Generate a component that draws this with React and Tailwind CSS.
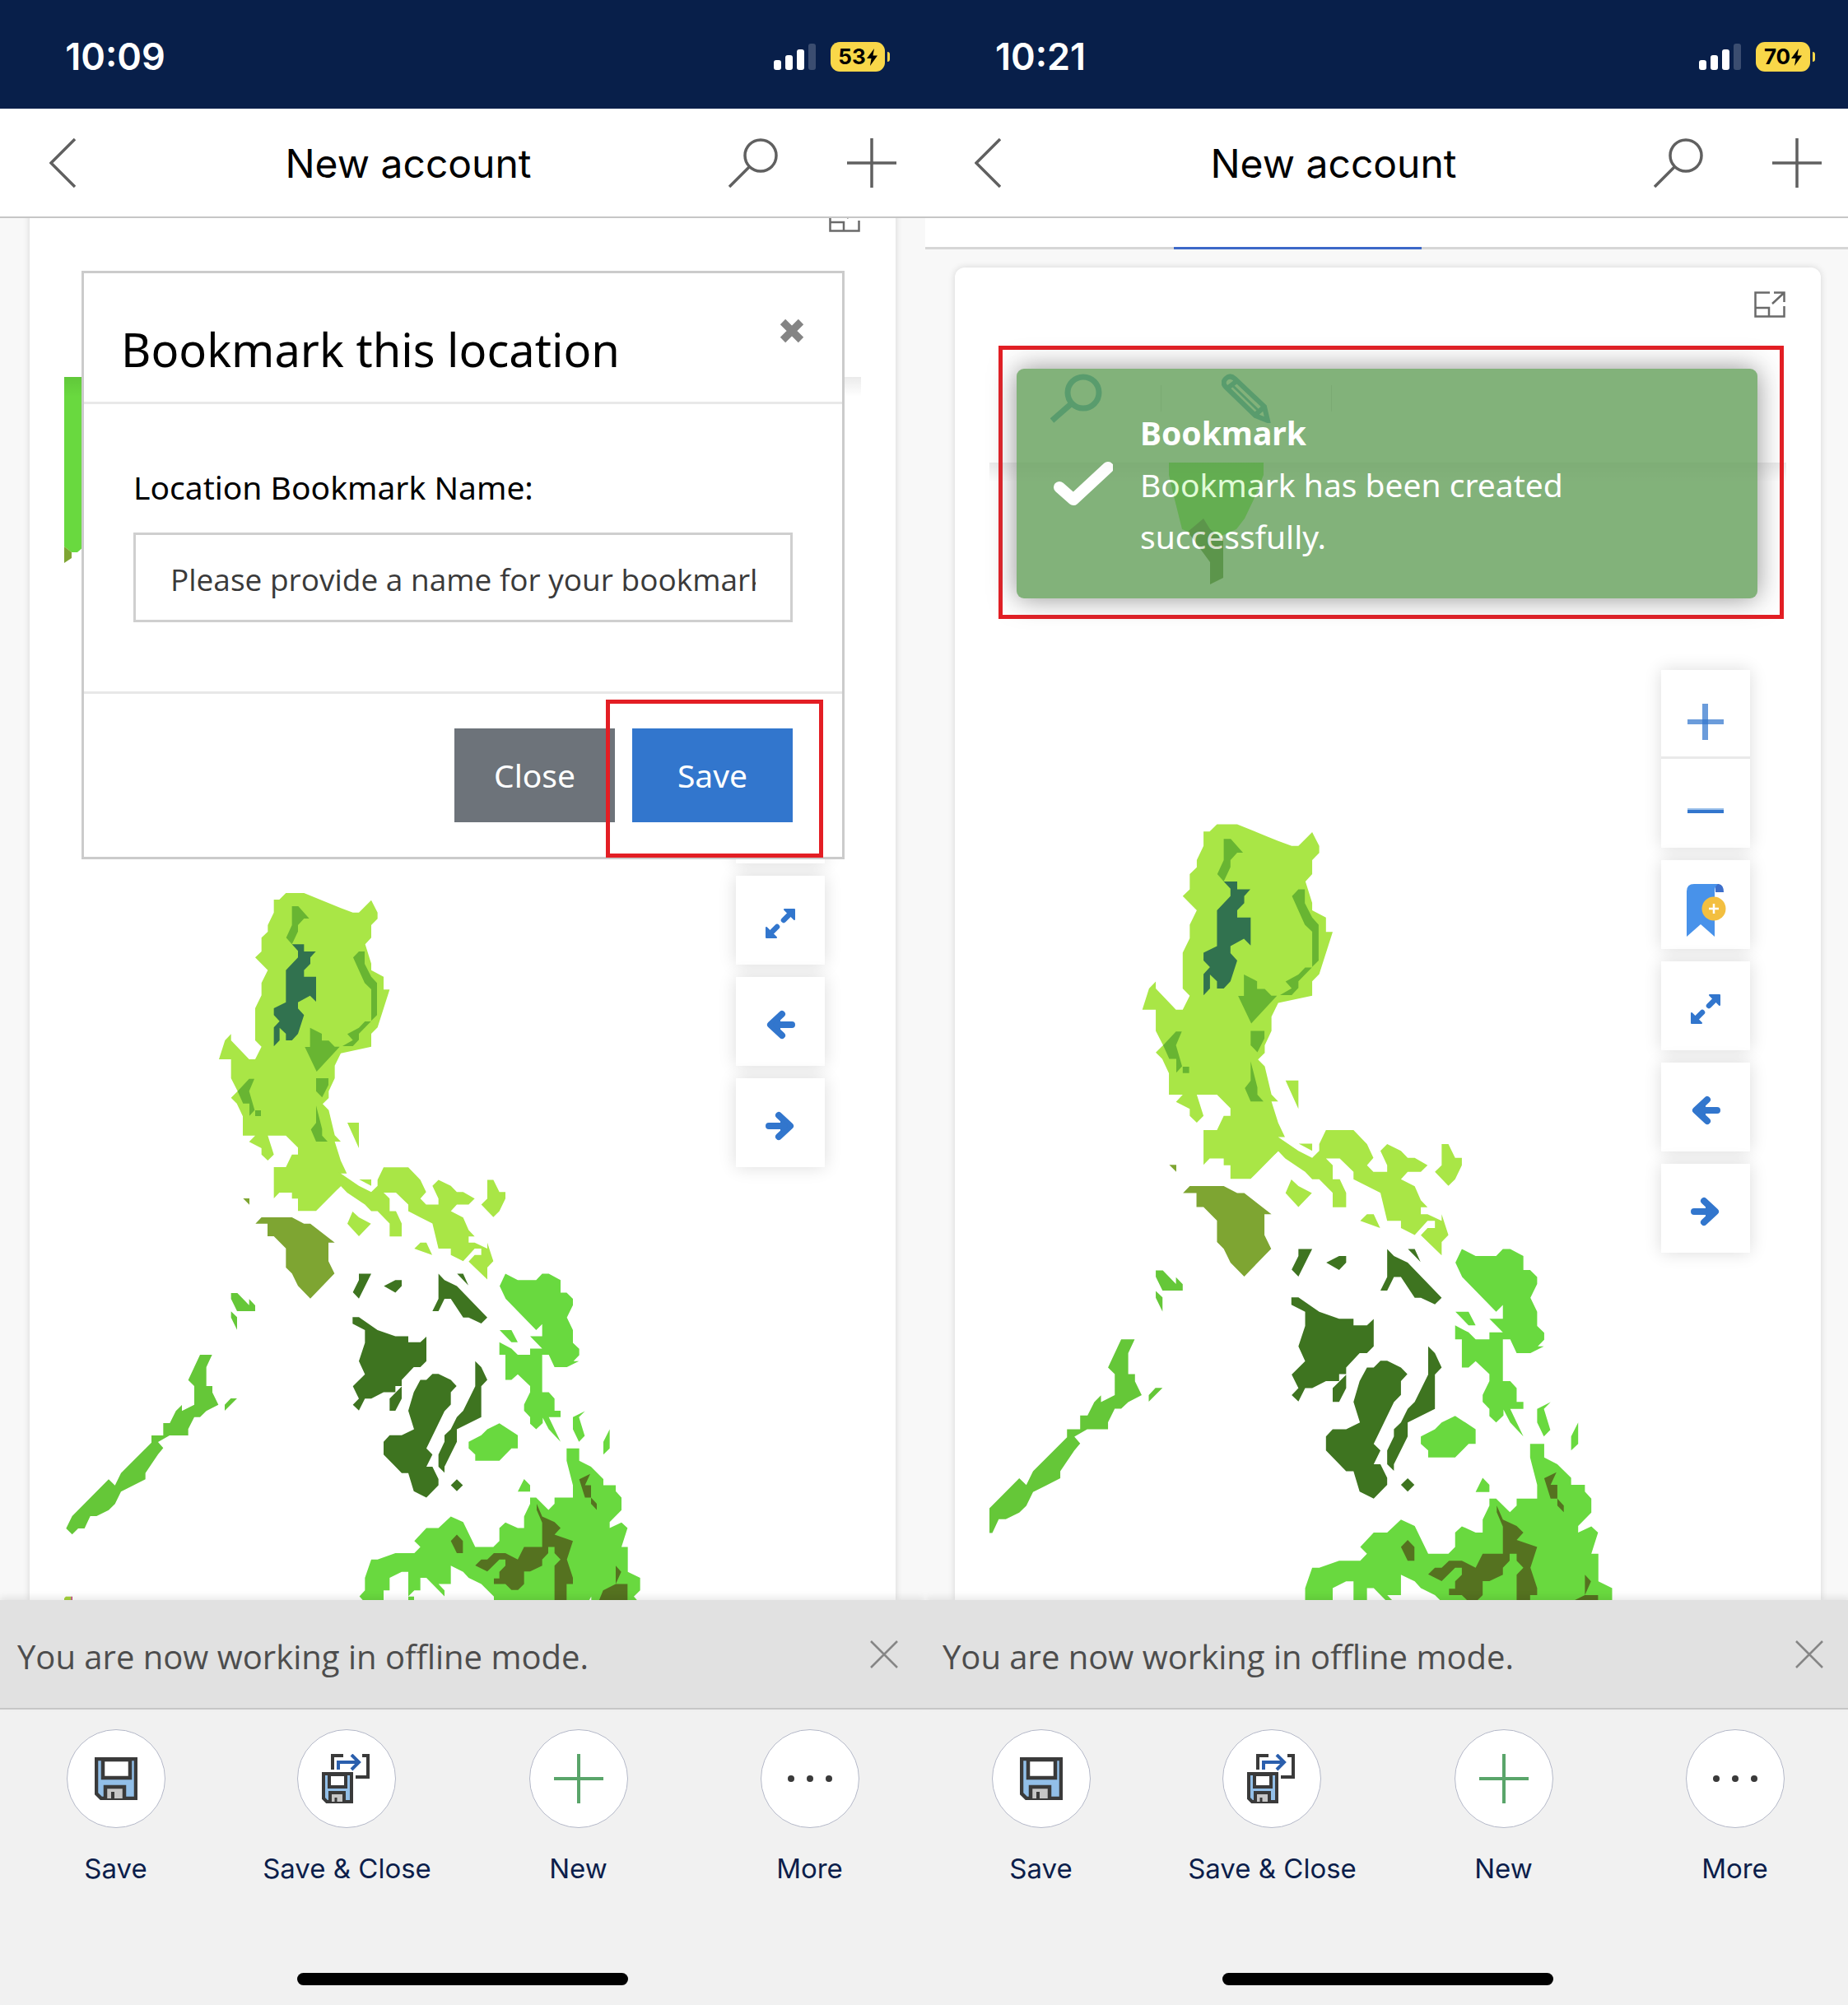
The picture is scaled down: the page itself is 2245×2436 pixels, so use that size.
import React from "react";

/* ---------- status bar and header ---------- */

function StatusBar({ time, battery }) {
  return (
    <div className="flex h-[132px] shrink-0 items-center justify-between bg-[#081f4a] pt-[6px] pr-[43px] pl-[70px] font-['Inter',sans-serif] text-white">
      <div className="w-[140px] text-center text-[45px] leading-[56px] font-semibold">{time}</div>
      <div className="flex items-center gap-[18px]">
        <svg width="51" height="33" viewBox="0 0 51 33" aria-label="Signal">
          <rect x="0" y="20" width="9" height="12" rx="3" fill="#fff" />
          <rect x="14" y="14" width="9" height="18" rx="3" fill="#fff" />
          <rect x="28" y="7" width="9" height="25" rx="3" fill="#fff" />
          <rect x="42" y="0" width="9" height="32" rx="3" fill="#3b4d70" />
        </svg>
        <div className="flex items-center gap-[3px]">
          <div className="flex h-9 w-[66px] items-center justify-center gap-px rounded-[11px] bg-[#f9d749] text-[26px] leading-9 font-bold text-black">
            <span>{battery}</span>
            <svg width="13" height="21" viewBox="0 0 13 21" aria-hidden="true">
              <path d="M9 0 0 12h5.500L4 21l9-12.500H7.500z" fill="#000" />
            </svg>
          </div>
          <div className="h-3 w-[3px] rounded-r-full bg-[#f9d749]" />
        </div>
      </div>
    </div>
  );
}

function Header() {
  return (
    <header className="flex h-[133px] shrink-0 items-center border-b-2 border-[#c6c6c6] bg-white pr-[35px] pl-[60px]">
      <button type="button" aria-label="Back" className="mr-[14px] w-8">
        <svg width="32" height="60" viewBox="0 0 32 60" fill="none" stroke="#606060" strokeWidth="3.500">
          <path d="M31 1 2 30l29 29" />
        </svg>
      </button>
      <h1 className="flex-1 pt-[2px] pl-px text-center font-['Inter',sans-serif] text-[48px] leading-[60px] font-normal text-black">
        New account
      </h1>
      <button type="button" aria-label="Search" className="mr-[84px]">
        <svg width="60" height="60" viewBox="0 0 60 60" fill="none" stroke="#606060" strokeWidth="3.500">
          <circle cx="39" cy="21" r="19" />
          <path d="M25.500 34.500 1 59" />
        </svg>
      </button>
      <button type="button" aria-label="Add">
        <svg width="60" height="60" viewBox="0 0 60 60" stroke="#606060" strokeWidth="3.500">
          <path d="M30 0v60M0 30h60" />
        </svg>
      </button>
    </header>
  );
}

/* ---------- map artwork ---------- */

function Islands() {
  return (
    <>
      <g transform="translate(-18 602) scale(0.33333)">
        <path
          fill="#a9e646"
          d="M862 75H928L1062 130 1106 146H1128L1173 101 1196 146V169L1173 192V238L1151 262 1173 332V356L1218 380V427H1240L1196 565 1173 588V635L1062 659 1040 704V750L1018 797V822L996 844 1018 866 1040 958 1062 981H1040L1062 1051 1084 1097H1062V1143L972 1234H906V1189H884V1167H838L818 1188V1074H862L884 1028H906V1003L862 959H796L818 1028 796 1050 773 1028V1005L728 982 750 959H705V889L683 842 662 821 686 797 662 750V681H618L640 612 662 589V612L728 681H750L773 635 750 612V495L773 448V403L796 356 750 310 773 288V238L796 216V192L818 146V99H838ZM1086 912H1128V1005ZM1129 1119H1173V1142ZM1105 1236 1128 1257 1172 1280 1128 1326 1086 1280Z"
        />
        <path
          fill="#68b532"
          d="M884 123H907L947 168H928L906 192V215L884 262 863 238 884 192ZM1128 288H1149V333L1173 380 1194 403V520L1173 541V426L1149 403 1107 310ZM1150 543H1172L1128 588V610L1106 633H1068L1106 611 1086 589 1128 566ZM950 566 993 588V613H1018L1040 635H1058L974 726 931 636H950ZM972 750H1017V775L994 820 972 797ZM728 752H747L728 797 748 866 729 887V842H706L686 797ZM750 867H771V888H750ZM972 850 994 935V959L1014 981H972L953 937 972 913Z"
        />
        <path
          fill="#31724f"
          d="M884 262H928V288H971L951 310V333L928 356V380H972V471L950 449 906 473V496L928 520 906 588 884 612H862V588L839 566V612L818 634V565L839 542 818 520V495L862 473V356L906 310V286Z"
        />
        <path
          fill="#7ea532"
          d="M706 1188H729V1211ZM773 1257H884L928 1280H951L1040 1349H1017V1417L1039 1462 951 1553 906 1507 884 1462 862 1440V1370L818 1326H795V1280H751Z"
        />
      </g>
      <g transform="translate(-18 1082) scale(0.33333)">
        <path
          fill="#65c738"
          d="M662 93H685L728 137V115L750 138V159H684L662 114ZM662 160 684 181V227L662 182ZM549 318H593L572 363V432H594V455L616 500 572 523 549 545H528L506 589V612H438L396 636 415 658 396 681 350 749V772L261 817 239 862 216 884 172 906H149L128 951H105L83 973 61 951 83 906 216 772 239 794 261 749 372 638V612H415V567H439L461 523 483 501V523L528 500V432L506 410ZM661 477H684L639 522V500Z"
        />
        <path fill="#a6d33c" d="M54 1205 60 1199H79V1240H54Z" />
        <path fill="#c04a78" d="M79 1199H84V1240H79Z" />
      </g>
      <g transform="translate(342 922) scale(0.33333 0.36351)">
        <path
          fill="#a9e646"
          d="M-30 120-18 126 48 167 93 188 116 167V147L138 105H228L272 147 293 188 272 210 293 230H338V210L316 167 338 147 383 167 405 188H428L470 210 448 230H405L383 252 428 273 448 315 470 336H448V357H470L516 377V357L538 419 516 440V480L448 420 470 398H494V377H470L428 419 383 398V377H338L316 293 228 252V230L183 190H138L160 210V252H183L204 293V336H160V293L116 252H93L70 230 5 190-18 168-30 178ZM250 377 272 357H294L315 398ZM516 147H538L560 188H582V210L560 252 538 272 494 230 516 210Z"
        />
        <path
          fill="#3e7420"
          d="M48 461H93L48 544 26 523 48 482ZM139 502 181 482H204V502L181 524ZM338 461 360 482 405 502 516 607 494 627 448 607H428L383 545H360L338 586H316L338 545ZM406 461H428L447 500ZM25 606H48L116 649 181 670H228V690H272L294 671V753L272 773H248L204 816V836H181V857H138L93 878H70L48 918 26 899 48 878 26 837 70 797 48 753 70 692V649L25 628ZM204 838V878L181 919H160V878ZM316 796H338L383 816 404 836 383 857V898L360 920 294 1045 316 1065 294 1106H316L338 1147V1168L294 1209 248 1188 228 1127H204L138 1065V1023L160 1001H204L249 981 228 919 248 857 272 816H294ZM472 753 494 773 516 816 494 837V940L405 981V1023L360 1106V1126L338 1106V1065L360 1023V1001L383 981 405 940 428 919 472 837ZM405 1148 427 1168 405 1188 383 1168Z"
        />
        <path
          fill="#69d93f"
          d="M448 1023 494 1001 516 981 560 961 627 1001V1045H604L560 1086H472V1065L448 1045ZM582 461 627 482H694L716 461H740L783 482V524H805L828 545V566L806 607 828 649V692L851 712V733L830 753H850L806 773H761L740 732H716V857H740L761 878V919H783V940H740L783 1023 740 981 718 942V960L694 981 672 962V940L650 919V898L672 857V836L627 797 604 816H582V732H560V690L604 711 627 732H672V711H716L672 670H716V629L694 649 583 545 561 502ZM561 649H604L627 690H604ZM828 940 872 920 850 940 871 1003 850 1023 828 981ZM962 981V1045L939 1065V1023ZM650 1147 672 1168V1189H627ZM805 1045H851V1086L894 1106 939 1147V1168H984V1188L1005 1209V1251L962 1291V1311L1005 1292 1027 1311 1005 1374H1028V1457L1073 1477V1519L1050 1540 1070 1560H540V1540L494 1498 448 1477 428 1457 383 1437V1498H338L360 1519V1539L294 1477H272V1519H250L228 1539V1457H204L160 1477V1519H138V1560H70L50 1539 70 1519V1477L93 1416H116L181 1395H250L272 1374 250 1354 294 1311H338L383 1272 428 1291 472 1374H538L560 1354V1311L582 1292 627 1311H650V1272L672 1230V1209H694L739 1250 761 1230V1209H828V1168L805 1086ZM228 1540H249V1560H228Z"
        />
        <path
          fill="#557220"
          d="M891 1130 872 1168H894V1209H872L851 1148ZM894 1209 915 1230V1250L894 1230ZM696 1230 716 1272 761 1291 783 1311 761 1333 828 1354 806 1416 828 1477V1498H805V1560H761V1437L783 1416 761 1395V1374H738V1395L716 1416V1437L672 1456H650V1498L628 1518H604L582 1498H540V1479H560V1457L582 1437V1416H560L516 1456 472 1436 494 1416H516L540 1395H582L627 1416 650 1374H716V1293L696 1250ZM405 1333 427 1354V1395H405L383 1354ZM984 1437 1004 1457 984 1498ZM984 1498H1027V1560H920L938 1519Z"
        />
        <path fill="#fff" d="M882 1560 895 1540V1560Z" />
      </g>
    </>
  );
}

function NearMap() {
  return (
    <svg className="absolute inset-0 h-full w-full" aria-label="Map of the Philippines">
      <path d="M0 0H24V206L16 213H9L0 206Z" fill="#69d93f" />
      <path d="M0 206 9 213V220L0 226Z" fill="#7ea532" />
      <Islands />
    </svg>
  );
}

function CloseMap() {
  return (
    <svg className="absolute inset-0 h-full w-full" aria-label="Map of the Philippines">
      <path d="M218 0H333V15L321 45 310 68 300 81 268 95 234 81 225 45 218 15Z" fill="#65ee30" />
      <path d="M260 68 268 81 284 93V140L268 148V121L246 91 241 84Z" fill="#3f6d10" />
      <g transform="translate(-24 -260) scale(1.1155)">
        <Islands />
      </g>
    </svg>
  );
}

/* ---------- map widget ---------- */

function ExpandCardIcon() {
  return (
    <svg width="38" height="32" viewBox="0 0 38 32" fill="none" stroke="#6a6a6a" strokeWidth="2.500">
      <path d="M19 1.500H1.500V30.500H36.500V18M1.500 20H18V30.500M24 1.500H36.500V13M36 2 22 15" />
    </svg>
  );
}

function MapButton({ label, children }) {
  return (
    <button
      type="button"
      aria-label={label}
      className="flex h-[108px] w-[108px] items-center justify-center bg-white pt-2 shadow-[0_0_20px_rgba(0,0,0,0.14)]"
    >
      {children}
    </button>
  );
}

function MapControls() {
  return (
    <div className="absolute top-[252px] right-11 flex flex-col gap-[15px]">
      <div className="flex flex-col shadow-[0_0_20px_rgba(0,0,0,0.14)]">
        <button
          type="button"
          aria-label="Zoom in"
          className="flex h-[108px] w-[108px] items-center justify-center border-b-[3px] border-[#e9e9e9] bg-white pt-5"
        >
          <svg width="44" height="44" viewBox="0 0 44 44" fill="#3276cd">
            <rect x="18" y="0" width="7" height="44" opacity="0.72" />
            <rect x="0" y="19" width="44" height="6" opacity="0.72" />
          </svg>
        </button>
        <button
          type="button"
          aria-label="Zoom out"
          className="flex h-[108px] w-[108px] items-center justify-center bg-white pt-5"
        >
          <svg width="44" height="44" viewBox="0 0 44 44">
            <rect x="0" y="18" width="44" height="3" fill="#9cc0ea" />
            <rect x="0" y="20" width="44" height="4" fill="#3276cd" />
          </svg>
        </button>
      </div>
      <MapButton label="Add bookmark">
        <svg width="50" height="74" viewBox="0 0 50 74">
          <path d="M37 8h4q6 1 6 10h-10z" fill="#3d6fcb" />
          <path d="M2 72V17Q2 8 11 8H40Q36 11 36 17V72L19 57Z" fill="#4892ea" />
          <circle cx="35" cy="38" r="14.500" fill="#f3bf40" />
          <path d="M35 32v12M29 38h12" stroke="#fff" strokeWidth="2.500" />
        </svg>
      </MapButton>
      <MapButton label="Full extent">
        <svg width="36" height="36" viewBox="0 0 36 36" fill="#3276cd" stroke="#3276cd">
          <path d="M23 1H35V13Z M1 23V35H13Z" strokeWidth="2" strokeLinejoin="round" />
          <path d="M22 14 30 6M6 30l8-8" strokeWidth="6.500" strokeLinecap="round" />
        </svg>
      </MapButton>
      <MapButton label="Previous extent">
        <svg width="36" height="36" viewBox="0 0 36 36" fill="#3276cd" stroke="#3276cd" strokeWidth="8" strokeLinejoin="round" strokeLinecap="round">
          <path d="M20 5 6 18 20 31M8 18H32" fill="none" />
          <path d="M18 9V27L8 18Z" stroke="none" />
        </svg>
      </MapButton>
      <MapButton label="Next extent">
        <svg width="36" height="36" viewBox="0 0 36 36" fill="#3276cd" stroke="#3276cd" strokeWidth="8" strokeLinejoin="round" strokeLinecap="round">
          <path d="M16 5 30 18 16 31M28 18H4" fill="none" />
          <path d="M18 9V27L28 18Z" stroke="none" />
        </svg>
      </MapButton>
    </div>
  );
}

function MapTools() {
  return (
    <div className="flex h-[157px] shrink-0 items-center">
      <button type="button" aria-label="Find" className="flex w-[208px] justify-center pl-1">
        <svg width="64" height="60" viewBox="0 0 64 60" fill="none" stroke="#2f93bd" strokeWidth="7">
          <circle cx="40" cy="23" r="19" />
          <path d="M26 36 2 57" />
        </svg>
      </button>
      <div className="h-8 w-px bg-[#d8d8d8]" />
      <button type="button" aria-label="Draw" className="flex w-[206px] justify-center">
        <svg width="60" height="60" viewBox="0 0 60 60" fill="none" stroke="#2f93bd" strokeWidth="6">
          <path d="M5 6Q10 1 16 6L52 40 56 57 41 51 5 16Q0 11 5 6ZM8 17 17 10M41 50 51 41" />
          <path d="M14 15 46 46" strokeWidth="3" />
        </svg>
      </button>
      <div className="h-8 w-px bg-[#d8d8d8]" />
    </div>
  );
}

function MapCard({ className, children }) {
  return (
    <section
      className={`mx-9 flex flex-1 flex-col rounded-t-xl bg-white px-[42px] shadow-[0_0_8px_rgba(0,0,0,0.14)] ${className}`}
    >
      <div className="flex h-20 shrink-0 items-start justify-end pt-[29px] pr-px">
        <button type="button" aria-label="Expand">
          <ExpandCardIcon />
        </button>
      </div>
      <MapTools />
      <div className="relative flex-1 overflow-hidden">
        {children}
        <div className="absolute inset-x-0 top-0 h-6 bg-gradient-to-b from-black/8 to-transparent" />
        <MapControls />
      </div>
    </section>
  );
}

/* ---------- overlays ---------- */

function BookmarkDialog() {
  return (
    <div
      role="dialog"
      aria-labelledby="dialog-title"
      className="absolute top-16 right-[98px] left-[99px] border-[3px] border-[#cbcbcb] bg-white font-['Noto_Sans',sans-serif]"
    >
      <div className="flex items-start justify-between border-b-[3px] border-[#e8e8e8] pt-[54px] pr-[46px] pb-[26px] pl-[45px]">
        <h2 id="dialog-title" className="text-[56px] leading-[76px] font-normal text-black">
          Bookmark this location
        </h2>
        <button type="button" aria-label="Close dialog" className="mt-px">
          <svg width="30" height="30" viewBox="0 0 30 30" stroke="#848484" strokeWidth="9">
            <path d="M4 4 26 26M26 4 4 26" />
          </svg>
        </button>
      </div>
      <div className="flex flex-col gap-[27px] px-[60px] pt-[73px] pb-[84px]">
        <label htmlFor="bookmark-name" className="text-[39px] leading-[56px] text-black">
          Location Bookmark Name:
        </label>
        <input
          id="bookmark-name"
          type="text"
          placeholder="Please provide a name for your bookmark"
          className="h-[109px] w-full border-[3px] border-[#cfcfcf] bg-white px-[42px] pt-1 font-['Open_Sans',sans-serif] text-[37px] leading-[52px] placeholder:text-[#3a3a3a] placeholder:opacity-100"
        />
      </div>
      <div className="flex justify-end gap-[21px] border-t-[3px] border-[#e8e8e8] px-[60px] pt-[42px] pb-[42px]">
        <button type="button" className="h-[114px] w-[195px] bg-[#6d737a] text-[39px] leading-[52px] text-white">
          Close
        </button>
        <div className="relative">
          <button type="button" className="h-[114px] w-[195px] bg-[#3276cd] text-[39px] leading-[52px] text-white">
            Save
          </button>
          <div className="pointer-events-none absolute -top-[35px] -right-[37px] -bottom-[43px] -left-8 border-[5px] border-[#e31e24]" />
        </div>
      </div>
    </div>
  );
}

function Toast() {
  return (
    <div className="absolute top-[155px] right-[81px] left-[89px] border-[5px] border-[#e31e24] pt-[23px] pr-[27px] pb-5 pl-[17px]">
      <div
        role="status"
        className="flex items-center gap-[33px] rounded-[9px] bg-[#649f5a] pt-[46px] pr-14 pb-11 pl-[45px] font-['Noto_Sans',sans-serif] text-[39px] leading-[63px] text-white opacity-80 shadow-[0_0_32px_#777]"
      >
        <svg className="shrink-0" width="72" height="56" viewBox="0 0 72 56" fill="none" stroke="#fff" strokeWidth="14">
          <path d="M7 31 24 46 66 7" strokeLinejoin="round" strokeLinecap="round" />
        </svg>
        <div>
          <p className="font-bold">Bookmark</p>
          <p>Bookmark has been created successfully.</p>
        </div>
      </div>
    </div>
  );
}

/* ---------- bottom area ---------- */

function Floppy() {
  return (
    <>
      <path d="M2 2H50V50H8L2 44Z" fill="#92bfe8" stroke="#3a3a3a" strokeWidth="4.500" />
      <path d="M10 3H43V25H10Z" fill="#fff" stroke="#3a3a3a" strokeWidth="4.500" />
      <path d="M13 50V36H36V50" fill="#c6c6c6" stroke="#3a3a3a" strokeWidth="4.500" />
      <path d="M22 42V50" stroke="#3a3a3a" strokeWidth="4" />
    </>
  );
}

function SmallFloppy() {
  return (
    <>
      <path d="M2 24H36V58H6L2 54Z" fill="#92bfe8" stroke="#3a3a3a" strokeWidth="4" />
      <path d="M9 25H29V40H9Z" fill="#fff" stroke="#3a3a3a" strokeWidth="4" />
      <path d="M10 58V47H27V58" fill="#c6c6c6" stroke="#3a3a3a" strokeWidth="4" />
      <path d="M17 53V58" stroke="#3a3a3a" strokeWidth="3" />
    </>
  );
}

const actions = [
  {
    label: "Save",
    icon: (
      <svg width="52" height="52" viewBox="0 0 52 52">
        <Floppy />
      </svg>
    ),
  },
  {
    label: "Save & Close",
    icon: (
      <svg width="60" height="60" viewBox="0 0 60 60" fill="none">
        <path d="M26 2H13V19M49 2H56V28H41" stroke="#3a3a3a" strokeWidth="4" />
        <path d="M20 19V10H44M36 1 45 10 36 19" stroke="#2b5fad" strokeWidth="4" />
        <SmallFloppy />
      </svg>
    ),
  },
  {
    label: "New",
    icon: (
      <svg width="60" height="60" viewBox="0 0 60 60" stroke="#5aa56a" strokeWidth="4">
        <path d="M30 0V60M0 30H60" />
      </svg>
    ),
  },
  {
    label: "More",
    icon: (
      <svg width="60" height="60" viewBox="0 0 60 60" fill="#3a3a3a">
        <circle cx="7" cy="30" r="4" />
        <circle cx="30" cy="30" r="4" />
        <circle cx="53" cy="30" r="4" />
      </svg>
    ),
  },
];

function OfflineBar() {
  return (
    <div className="relative flex h-[133px] shrink-0 items-center justify-between border-b-2 border-[#c6c6c6] bg-[#e1e1e1] pr-[33px] pl-[21px] font-['Open_Sans',sans-serif] shadow-[0_-4px_8px_rgba(0,0,0,0.08)]">
      <p className="pt-[6px] text-[40px] leading-[56px] text-[#4d4d4d]">You are now working in offline mode.</p>
      <button type="button" aria-label="Dismiss">
        <svg width="34" height="34" viewBox="0 0 34 34" stroke="#868686" strokeWidth="2.500">
          <path d="M1 1 33 33M33 1 1 33" />
        </svg>
      </button>
    </div>
  );
}

function BottomBar() {
  return (
    <nav className="flex h-[359px] shrink-0 flex-col items-center justify-between bg-[#f1f1f1] pt-6 pb-6">
      <ul className="grid w-full grid-cols-4">
        {actions.map((action) => (
          <li key={action.label} className="flex justify-center">
            <button
              type="button"
              className="flex flex-col items-center gap-[23px] font-['Inter',sans-serif] text-[33px] leading-[52px] text-[#0c1e4b]"
            >
              <span className="flex h-[120px] w-[120px] items-center justify-center rounded-full border border-[#b4b8c8] bg-white">
                {action.icon}
              </span>
              {action.label}
            </button>
          </li>
        ))}
      </ul>
      <div className="h-[15px] w-[402px] rounded-full bg-black" />
    </nav>
  );
}

/* ---------- screens ---------- */

function Phone({ time, battery, className = "", children }) {
  return (
    <div className={`flex h-screen flex-col overflow-hidden bg-[#f8f8f8] ${className}`}>
      <StatusBar time={time} battery={battery} />
      <Header />
      <main className="relative flex min-h-0 flex-1 flex-col overflow-hidden">{children}</main>
      <OfflineBar />
      <BottomBar />
    </div>
  );
}

export default function App() {
  return (
    <div className="grid grid-cols-[1124fr_1121fr] overflow-hidden">
      <Phone time="10:09" battery="53">
        <MapCard className="-mt-11">
          <NearMap />
        </MapCard>
        <BookmarkDialog />
      </Phone>
      <Phone time="10:21" battery="70" className="-mr-[3px]">
        <div className="flex h-[38px] shrink-0 items-end border-b-[3px] border-[#d6d6d6] bg-white">
          <div className="-mb-[3px] ml-[302px] h-[3px] w-[301px] bg-[#3c68c8]" />
        </div>
        <MapCard className="mt-[22px]">
          <CloseMap />
        </MapCard>
        <Toast />
      </Phone>
    </div>
  );
}
